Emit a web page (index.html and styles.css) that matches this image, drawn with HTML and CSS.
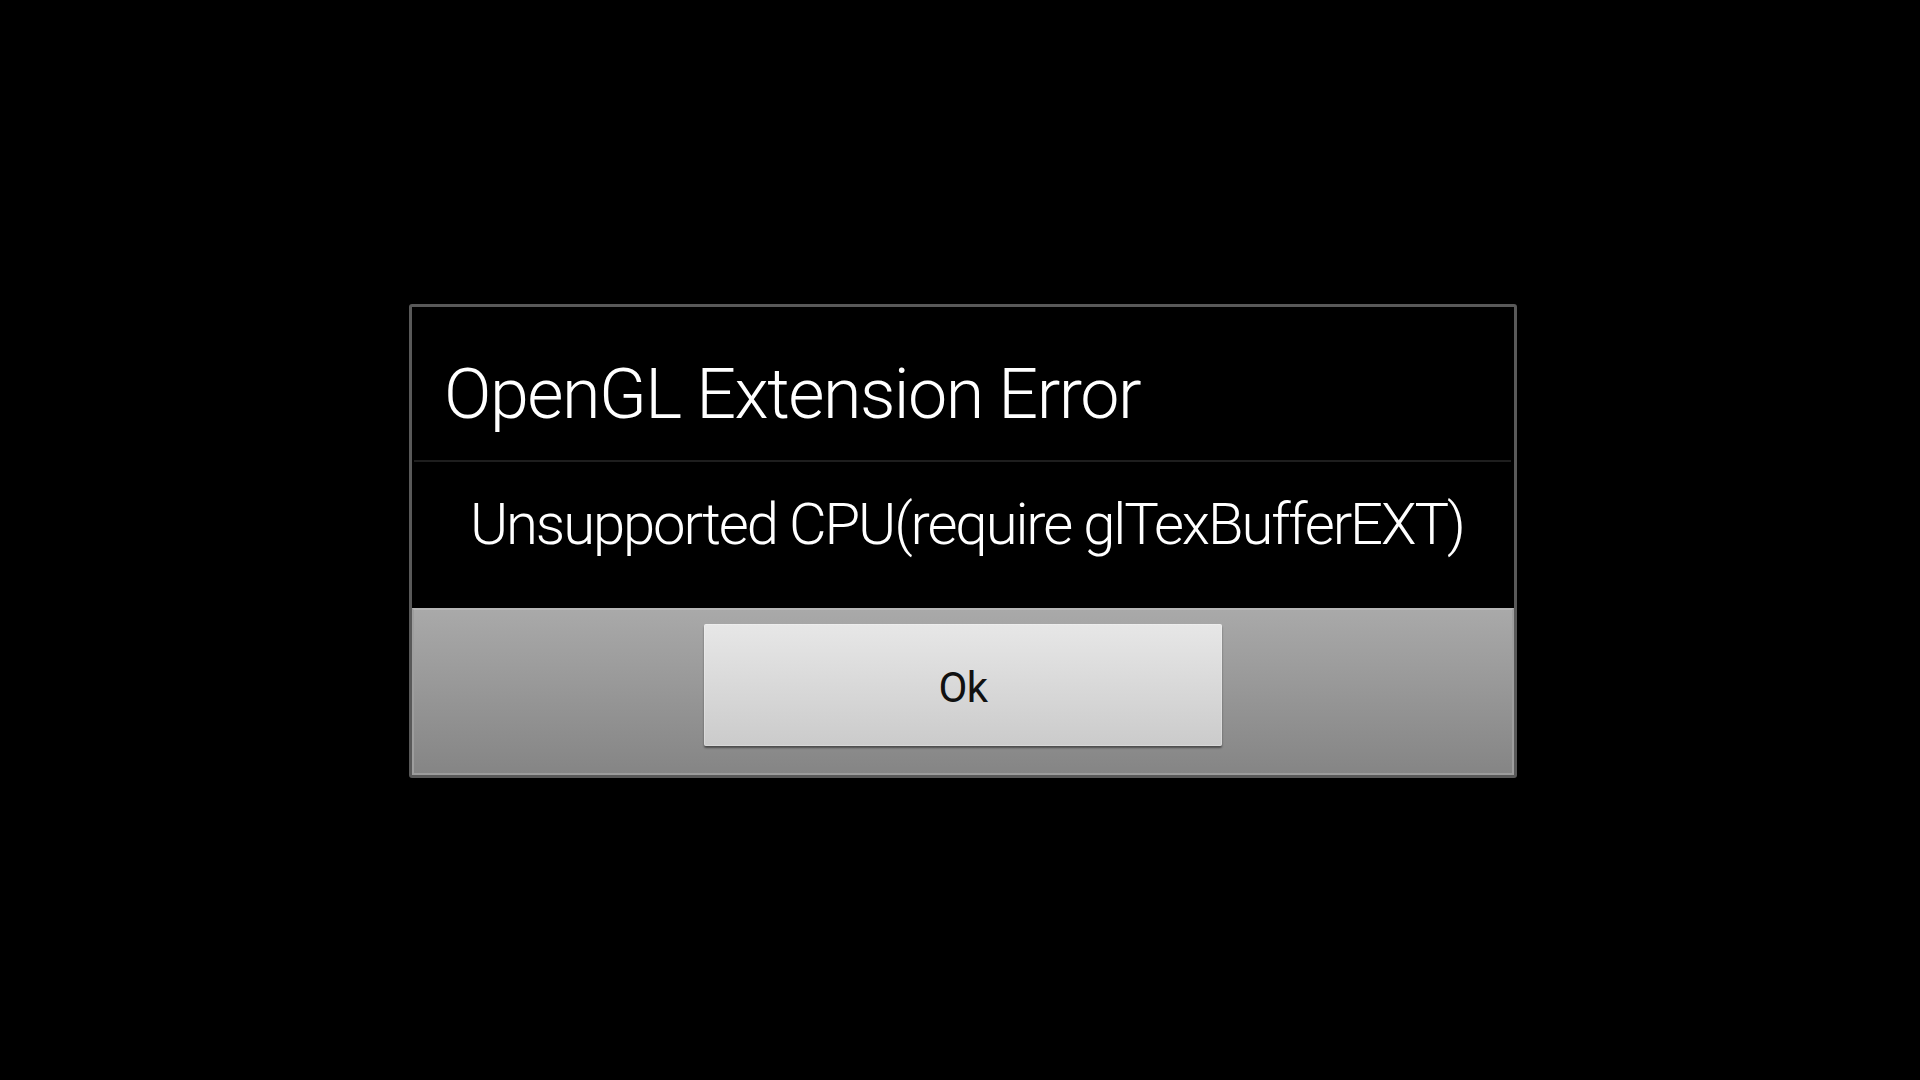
FILE: index.html
```html
<!DOCTYPE html>
<html lang="en">

<head>
    <meta charset="UTF-8">
    <meta name="viewport" content="width=device-width, initial-scale=1.0">
    <title>OpenGL Extension Error</title>
    <link rel="stylesheet" href="styles.css">
</head>

<body>
    <div class="screen">
        <!-- Error Dialog -->
        <div class="dialog">
            <div class="dialog-title">OpenGL Extension Error</div>
            <div class="dialog-divider"></div>
            <div class="dialog-message">Unsupported CPU(require glTexBufferEXT)</div>
            <div class="dialog-footer">
                <button class="ok-button">Ok</button>
            </div>
        </div>
    </div>
</body>

</html>
```

FILE: styles.css
```css
/* General Styles */
html,
body {
    margin: 0;
    padding: 0;
    background: #000;
}

body {
    font-family: Roboto, 'Noto Sans', sans-serif;
    color: #fff;
}

.screen {
    width: 1920px;
    height: 1080px;
    box-sizing: border-box;
    padding: 304px 0 0 409px;
}

/* Dialog */
.dialog {
    width: 1108px;
    box-sizing: border-box;
    border: 3px solid #595959;
    border-radius: 3px;
    background: #000;
    display: flex;
    flex-direction: column;
}

.dialog-title {
    height: 153px;
    box-sizing: border-box;
    padding: 52px 0 0 32px;
    font-size: 70px;
    font-weight: 300;
    line-height: 1;
    letter-spacing: -1.5px;
    white-space: nowrap;
}

.dialog-divider {
    height: 2px;
    margin: 0 3px 0 2px;
    background: #1e1e1e;
}

.dialog-message {
    height: 146px;
    box-sizing: border-box;
    padding: 33px 0 0 58px;
    font-size: 58px;
    font-weight: 300;
    line-height: 1;
    letter-spacing: -2.1px;
    white-space: nowrap;
}

/* Footer */
.dialog-footer {
    height: 167px;
    box-sizing: border-box;
    padding-top: 14px;
    border: 2px solid #9e9e9e;
    border-top-color: #b6b6b6;
    border-bottom-color: #9c9c9c;
    background: linear-gradient(to bottom, #a9a9a9, #858585);
    display: flex;
    justify-content: center;
    align-items: flex-start;
}

.ok-button {
    width: 518px;
    height: 122px;
    padding: 6px 0 0;
    border: none;
    border-radius: 2px;
    background: linear-gradient(to bottom, #e7e7e7, #cbcbcb);
    box-shadow: 0 2px 2px rgba(0, 0, 0, 0.45), inset 0 0 0 1px rgba(255, 255, 255, 0.25);
    font-family: Roboto, 'Noto Sans', sans-serif;
    font-size: 42px;
    font-weight: 400;
    line-height: 1;
    letter-spacing: -0.5px;
    color: #111;
}
```
